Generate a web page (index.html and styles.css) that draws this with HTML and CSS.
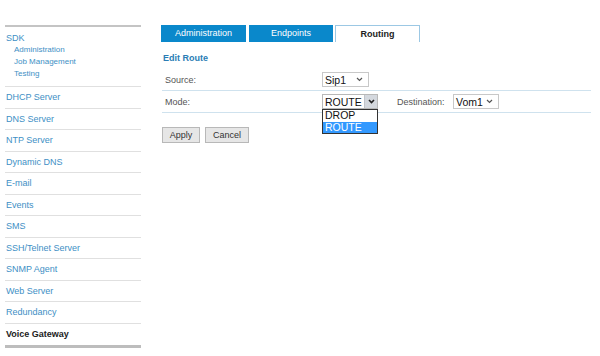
FILE: index.html
```html
<!DOCTYPE html>
<html>
<head>
<meta charset="utf-8">
<link rel="stylesheet" href="styles.css">
</head>
<body>
<div class="page">
  <nav class="sidebar">
    <div class="group">
      <div class="group-title">SDK</div>
      <div class="sub">Administration</div>
      <div class="sub">Job Management</div>
      <div class="sub">Testing</div>
    </div>
    <div class="item">DHCP Server</div>
    <div class="item">DNS Server</div>
    <div class="item">NTP Server</div>
    <div class="item">Dynamic DNS</div>
    <div class="item">E-mail</div>
    <div class="item">Events</div>
    <div class="item">SMS</div>
    <div class="item">SSH/Telnet Server</div>
    <div class="item">SNMP Agent</div>
    <div class="item">Web Server</div>
    <div class="item">Redundancy</div>
    <div class="item active">Voice Gateway</div>
  </nav>
  <main class="main">
    <div class="tabs">
      <div class="tab tab-admin">Administration</div>
      <div class="tab tab-end">Endpoints</div>
      <div class="tab tab-route current">Routing</div>
    </div>
    <div class="title">Edit Route</div>
    <div class="row">
      <div class="label">Source:</div>
      <div class="select sel-sip">Sip1<svg class="chev" width="7" height="5" viewBox="0 0 7 5"><path d="M1 1l2.5 2.5L6 1" fill="none" stroke="#555" stroke-width="1.2"/></svg></div>
    </div>
    <div class="row">
      <div class="label">Mode:</div>
      <div class="mode-wrap">
        <div class="select sel-mode">ROUTE<span class="arrowbox"><svg width="7" height="5" viewBox="0 0 7 5"><path d="M1 1l2.5 2.5L6 1" fill="none" stroke="#222" stroke-width="1.6"/></svg></span></div>
        <div class="dropdown">
          <div class="opt">DROP</div>
          <div class="opt hl">ROUTE</div>
        </div>
      </div>
      <div class="label2">Destination:</div>
      <div class="select sel-vom">Vom1<svg class="chev" width="7" height="5" viewBox="0 0 7 5"><path d="M1 1l2.5 2.5L6 1" fill="none" stroke="#555" stroke-width="1.2"/></svg></div>
    </div>
    <div class="buttons">
      <div class="btn btn-apply">Apply</div>
      <div class="btn btn-cancel">Cancel</div>
    </div>
  </main>
</div>
</body>
</html>
```
FILE: styles.css
```css
html, body {
  margin: 0;
  padding: 0;
  background: #fff;
}
body {
  font-family: "Liberation Sans", Arial, sans-serif;
  width: 600px;
  height: 356px;
  overflow: hidden;
}
.page {
  display: flex;
  padding-top: 25px;
}
.sidebar {
  margin-left: 5px;
  width: 136px;
  border-top: 2px solid #c4c4c4;
}
.group {
  padding: 5px 0 6px 0;
  border-bottom: 1px solid #e0e0e0;
}
.group-title {
  font-size: 9px;
  line-height: 12px;
  color: #3e8fc5;
  padding-left: 1px;
}
.sub {
  font-size: 8px;
  line-height: 12px;
  color: #3e8fc5;
  padding-left: 9px;
}
.item {
  height: 20.55px;
  line-height: 21px;
  font-size: 9px;
  color: #3e8fc5;
  padding-left: 1px;
  border-bottom: 1px solid #e0e0e0;
}
.item.active {
  color: #222;
  font-weight: bold;
  border-bottom: 3px solid #bdbdbd;
}
.main {
  margin-left: 21px;
  width: 429px;
}
.tabs {
  display: flex;
  gap: 3px;
  margin-left: -1px;
}
.tab {
  height: 17px;
  line-height: 17px;
  text-align: center;
  background: #0a88cb;
  color: #fff;
  font-size: 9px;
  box-sizing: border-box;
}
.tab-admin {
  width: 85px;
}
.tab-end {
  width: 84px;
}
.tab-route {
  width: 85px;
  margin-left: -1px;
}
.tab.current {
  background: #fff;
  color: #222;
  font-weight: bold;
  border: 1px solid #9cc8e4;
  border-bottom: none;
  line-height: 16px;
}
.title {
  margin-top: 10px;
  font-size: 9px;
  font-weight: bold;
  color: #2a7db5;
  line-height: 12px;
  padding-left: 1px;
}
.row {
  display: flex;
  align-items: center;
  height: 21px;
  border-bottom: 1px solid #cfe2ee;
}
.title + .row {
  margin-top: 5px;
}
.label {
  width: 157px;
  padding-left: 3px;
  font-size: 9px;
  color: #555;
}
.label2 {
  margin-left: 19px;
  width: 56px;
  font-size: 9px;
  color: #555;
}
.select {
  display: flex;
  align-items: center;
  box-sizing: border-box;
  height: 15px;
  border: 1px solid #c8c8c8;
  background: #fff;
  font-size: 10.5px;
  color: #111;
  padding-left: 2px;
  position: relative;
}
.sel-sip {
  width: 47px;
}
.sel-vom {
  width: 46px;
}
.chev {
  margin-left: auto;
  margin-right: 5px;
}
.mode-wrap {
  position: relative;
}
.sel-mode {
  width: 56px;
  border-color: #b8b8b8;
  padding-left: 2px;
  padding-right: 0;
}
.arrowbox {
  margin-left: auto;
  width: 12px;
  height: 13px;
  background: #d4d8de;
  display: flex;
  align-items: center;
  justify-content: center;
  border-left: 1px solid #c0c4ca;
}
.dropdown {
  position: absolute;
  left: 0;
  top: 15px;
  width: 56px;
  box-sizing: border-box;
  border: 1px solid #333;
  background: #fff;
  z-index: 2;
}
.opt {
  font-size: 10.5px;
  line-height: 11.5px;
  height: 11.5px;
  padding-left: 2px;
  color: #111;
}
.opt.hl {
  background: #3399ff;
  color: #fff;
}
.buttons {
  display: flex;
  gap: 5px;
  margin-top: 14px;
}
.btn {
  box-sizing: border-box;
  height: 16px;
  line-height: 14px;
  border: 1px solid #b8b8b8;
  background: #e6e6e6;
  font-size: 9px;
  color: #333;
  text-align: center;
}
.btn-apply {
  width: 38px;
}
.btn-cancel {
  width: 44px;
}
```
